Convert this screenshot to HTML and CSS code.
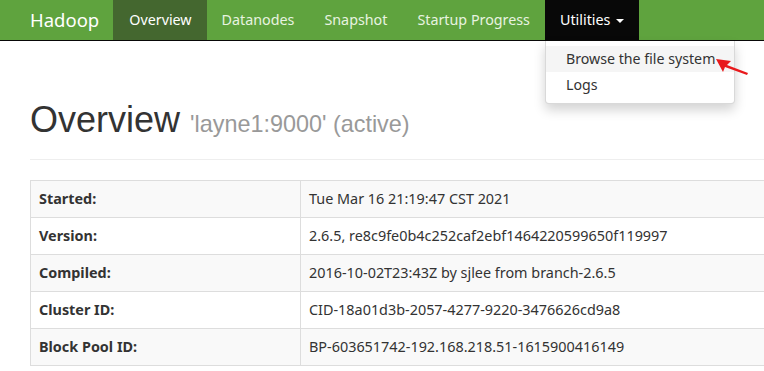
FILE: index.html
```html
<!DOCTYPE html>
<html>
<head>
<meta charset="utf-8">
<link rel="stylesheet" href="styles.css">
</head>
<body>
<nav class="navbar">
  <a class="brand">Hadoop</a>
  <ul class="nav">
    <li class="active"><a>Overview</a></li>
    <li><a>Datanodes</a></li>
    <li><a>Snapshot</a></li>
    <li><a>Startup Progress</a></li>
    <li class="open"><a>Utilities <span class="caret"></span></a>
      <ul class="dropdown">
        <li class="hover"><a>Browse the file system</a></li>
        <li><a>Logs</a></li>
      </ul>
    </li>
  </ul>
</nav>
<svg class="arrow" width="40" height="24" viewBox="0 0 40 24">
  <polygon points="0,0 15,2 11,6 32,14 31,16 9,8 7,13" fill="#e8191c"/>
</svg>
<div class="container">
  <div class="page-header">
    <h1>Overview <small>'layne1:9000' (active)</small></h1>
  </div>
  <table class="table">
    <tr><th>Started:</th><td>Tue Mar 16 21:19:47 CST 2021</td></tr>
    <tr><th>Version:</th><td>2.6.5, re8c9fe0b4c252caf2ebf1464220599650f119997</td></tr>
    <tr><th>Compiled:</th><td>2016-10-02T23:43Z by sjlee from branch-2.6.5</td></tr>
    <tr><th>Cluster ID:</th><td>CID-18a01d3b-2057-4277-9220-3476626cd9a8</td></tr>
    <tr><th>Block Pool ID:</th><td>BP-603651742-192.168.218.51-1615900416149</td></tr>
  </table>
</div>
</body>
</html>
```
FILE: styles.css
```css
html, body { margin: 0; padding: 0; overflow: hidden; }
body {
  font-family: "Noto Sans", "Open Sans", sans-serif;
  font-size: 14.4px;
  color: #333;
  background: #fff;
  position: relative;
  width: 764px;
  height: 371px;
}
.navbar {
  display: flex;
  align-items: stretch;
  height: 40px;
  background: #5fa33e;
  border-bottom: 1px solid #080808;
  padding-left: 15px;
}
.brand {
  color: #fff;
  font-size: 18.5px;
  line-height: 40px;
  padding: 0 14px 0 15px;
}
.nav {
  display: flex;
  list-style: none;
  margin: 0;
  padding: 0;
}
.nav > li { position: relative; }
.nav > li > a {
  display: block;
  color: #e8f3e0;
  line-height: 40px;
  padding: 0 15px;
  font-size: 14.3px;
}
.nav > li.active > a { background: #44672f; color: #fff; padding: 0 15px 0 16px; }
.nav > li.open > a { background: #080808; color: #fff; }
.caret {
  display: inline-block;
  width: 0; height: 0;
  margin-left: 2px;
  vertical-align: middle;
  border-top: 4px solid #fff;
  border-left: 4px solid transparent;
  border-right: 4px solid transparent;
}
.dropdown {
  position: absolute;
  top: 41px;
  left: 0;
  width: 188px;
  list-style: none;
  margin: 0;
  padding: 5px 0;
  background: #fff;
  border: 1px solid rgba(0,0,0,.15);
  border-top: none;
  border-radius: 0 0 4px 4px;
  box-shadow: 0 6px 12px rgba(0,0,0,.175);
}
.dropdown a {
  display: block;
  padding: 3px 20px;
  line-height: 20px;
  color: #333;
  font-size: 14.2px;
  white-space: nowrap;
}
.dropdown li.hover a { background: #f5f5f5; }
.arrow { position: absolute; left: 716px; top: 59px; }
.container { padding-left: 30px; }
.page-header {
  padding-bottom: 9px;
  margin: 59px 0 20px;
  border-bottom: 1px solid #eee;
  width: 900px;
}
h1 {
  font-family: "Liberation Sans", Arial, sans-serif;
  font-weight: 500;
  font-size: 36px;
  line-height: 1.1;
  margin: 20px 0 10px;
  color: #333;
}
h1 small { font-size: 65%; color: #999; font-weight: 400; }
.table {
  border-collapse: collapse;
  width: 900px;
  border: 1px solid #ddd;
}
.table th, .table td {
  padding: 8px;
  line-height: 20px;
  border: 1px solid #ddd;
  text-align: left;
  vertical-align: top;
}
.table th { width: 253px; font-weight: 700; }
.table tr:nth-child(odd) { background: #f9f9f9; }
```
